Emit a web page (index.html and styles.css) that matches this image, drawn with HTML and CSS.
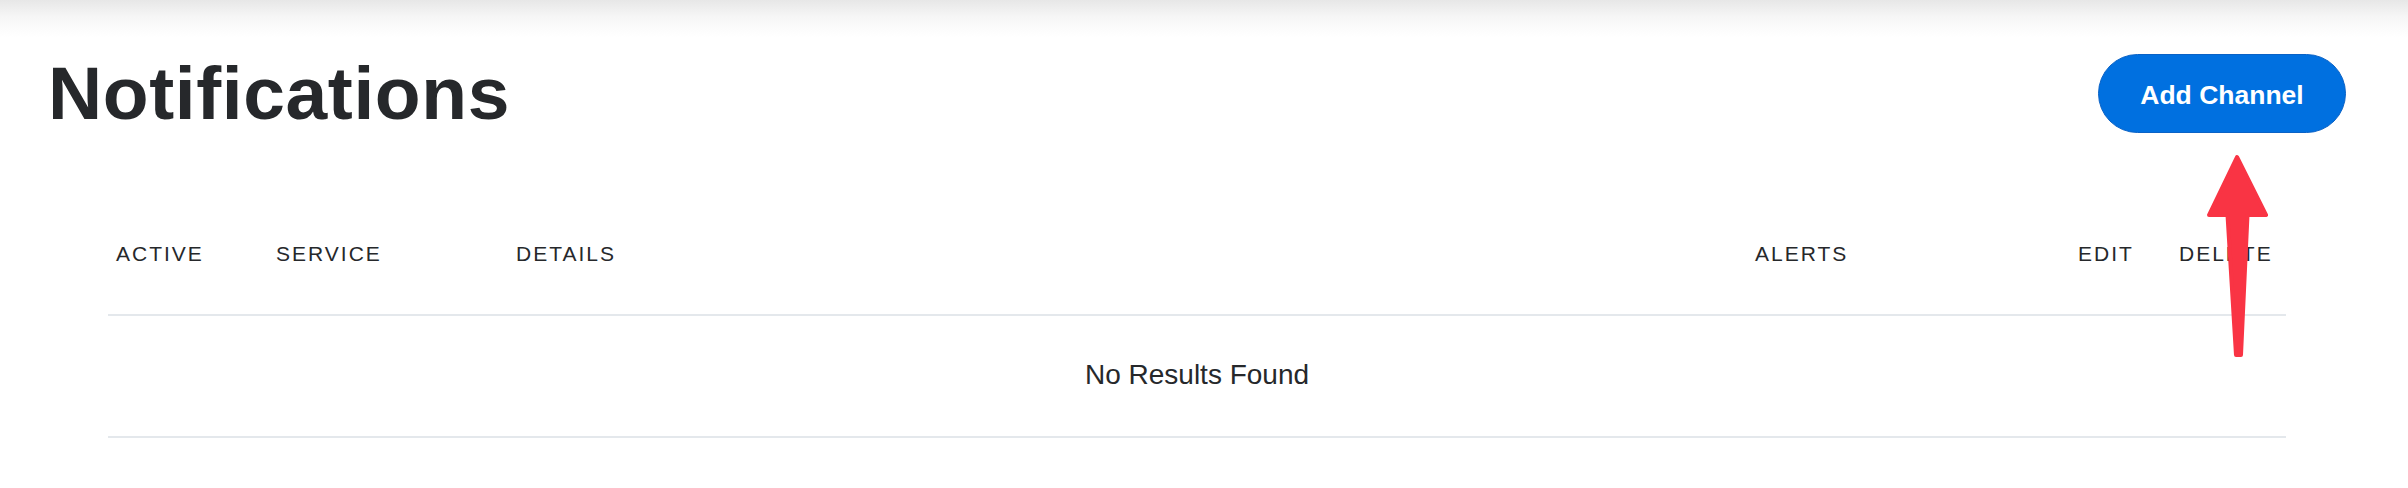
FILE: index.html
```html
<!DOCTYPE html>
<html lang="en">
<head>
<meta charset="utf-8">
<title>Notifications</title>
<link rel="stylesheet" href="styles.css">
</head>
<body>
<div class="top-shade"></div>
<main class="page">
  <header class="page-header">
    <h1 class="title">Notifications</h1>
    <button class="btn-primary" type="button">Add Channel</button>
  </header>
  <table class="channels">
    <colgroup>
      <col class="c-active"><col class="c-service"><col class="c-details"><col class="c-alerts"><col class="c-edit"><col class="c-delete">
    </colgroup>
    <thead>
      <tr>
        <th>ACTIVE</th>
        <th>SERVICE</th>
        <th>DETAILS</th>
        <th>ALERTS</th>
        <th>EDIT</th>
        <th>DELETE</th>
      </tr>
    </thead>
    <tbody>
      <tr>
        <td class="empty" colspan="6">No Results Found</td>
      </tr>
    </tbody>
  </table>
  <svg class="arrow" width="90" height="230" viewBox="0 0 90 230" aria-hidden="true">
    <path d="M47 17 L76 75 L57.5 75 L51 215 L46 215 L37.5 75 L19 75 Z" fill="#f93444" stroke="#f93444" stroke-width="4" stroke-linejoin="round"/>
  </svg>
</main>
</body>
</html>
```
FILE: styles.css
```css
html, body {
  margin: 0;
  padding: 0;
  background: #ffffff;
}

body {
  font-family: "Liberation Sans", Arial, sans-serif;
  color: #26282b;
  width: 2408px;
  height: 488px;
  overflow: hidden;
}

.top-shade {
  height: 37px;
  background: linear-gradient(to bottom, #e7e7e7 0%, #f6f6f6 45%, #ffffff 100%);
}

.page {
  position: relative;
  padding-top: 17px;
}

.page-header {
  height: 79px;
  padding: 0 62px 0 48px;
  display: flex;
  align-items: center;
  justify-content: space-between;
}

.title {
  margin: 0;
  font-size: 75px;
  line-height: 75px;
  font-weight: 700;
  letter-spacing: 0.6px;
  color: #26282b;
}

.btn-primary {
  box-sizing: border-box;
  height: 79px;
  width: 248px;
  padding: 3px 0 0;
  border: 1.5px solid #0a62c6;
  border-radius: 40px;
  background: #0070e0;
  color: #ffffff;
  font-family: "Liberation Sans", Arial, sans-serif;
  font-size: 26.5px;
  font-weight: 700;
  display: flex;
  align-items: center;
  justify-content: center;
}

.channels {
  margin: 109px 0 0 108px;
  width: 2178px;
  border-collapse: collapse;
  table-layout: fixed;
}

.c-active { width: 160px; }
.c-service { width: 240px; }
.c-details { width: 1239px; }
.c-alerts { width: 323px; }
.c-edit { width: 101px; }
.c-delete { width: 115px; }

.channels th {
  text-align: left;
  font-weight: 400;
  font-size: 21px;
  line-height: 24px;
  letter-spacing: 2px;
  padding: 0 0 48px 8px;
  border-bottom: 2px solid #e4e8ec;
  color: #26282b;
  white-space: nowrap;
}

.channels td.empty {
  text-align: center;
  font-size: 28px;
  line-height: 32px;
  padding: 43px 0 45px;
  border-bottom: 2px solid #e4e8ec;
  color: #26282b;
}

.arrow {
  position: absolute;
  left: 2190px;
  top: 103px;
}
```
